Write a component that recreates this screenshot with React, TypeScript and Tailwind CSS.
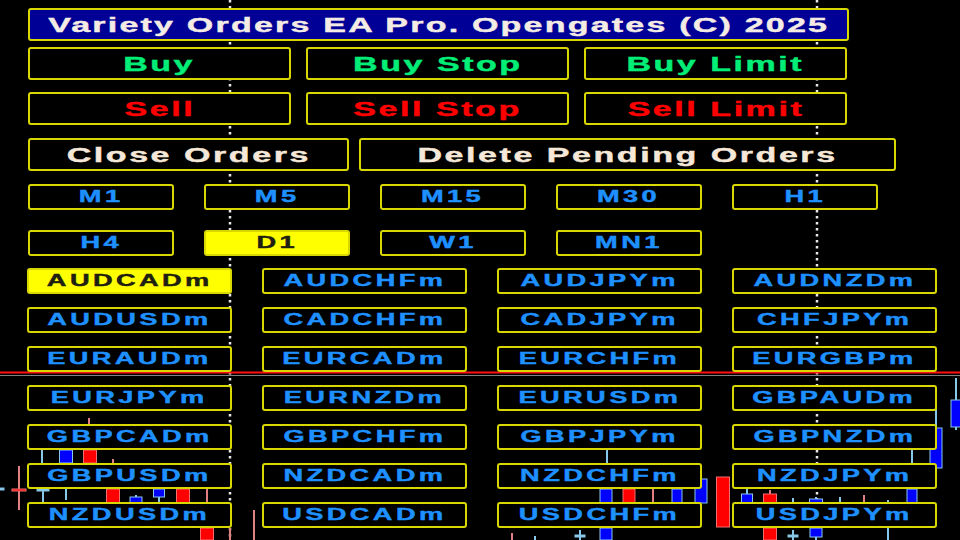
import React from "react";

const FONT = { fontFamily: '"Liberation Sans", Arial, sans-serif' };

type Candle = { x: number; w: number; bt: number; bb: number; wt: number; wb: number; c: "r" | "b" | "d" };

const candles: Candle[] = [
  { x: 89, w: 0, bt: 418, bb: 424, wt: 418, wb: 424, c: "r" },
  { x: 42, w: 0, bt: 450, bb: 463, wt: 450, wb: 463, c: "d" },
  { x: 66, w: 13, bt: 450, bb: 463, wt: 450, wb: 463, c: "b" },
  { x: 90, w: 13, bt: 450, bb: 463, wt: 448, wb: 463, c: "r" },
  { x: 113, w: 0, bt: 459, bb: 463, wt: 459, wb: 463, c: "r" },
  { x: 19, w: 14, bt: 489, bb: 491, wt: 466, wb: 510, c: "r" },
  { x: 2, w: 4, bt: 488, bb: 490, wt: 488, wb: 490, c: "d" },
  { x: 43, w: 12, bt: 489, bb: 491, wt: 489, wb: 503, c: "d" },
  { x: 66, w: 0, bt: 489, bb: 500, wt: 489, wb: 500, c: "d" },
  { x: 113, w: 13, bt: 489, bb: 503, wt: 489, wb: 503, c: "r" },
  { x: 136, w: 12, bt: 497, bb: 503, wt: 495, wb: 503, c: "b" },
  { x: 159, w: 11, bt: 489, bb: 497, wt: 489, wb: 503, c: "b" },
  { x: 183, w: 13, bt: 489, bb: 503, wt: 489, wb: 503, c: "r" },
  { x: 207, w: 0, bt: 489, bb: 503, wt: 489, wb: 503, c: "r" },
  { x: 207, w: 13, bt: 528, bb: 540, wt: 528, wb: 540, c: "r" },
  { x: 230, w: 0, bt: 528, bb: 540, wt: 528, wb: 540, c: "r" },
  { x: 254, w: 0, bt: 510, bb: 540, wt: 510, wb: 540, c: "r" },
  { x: 607, w: 0, bt: 450, bb: 463, wt: 450, wb: 463, c: "d" },
  { x: 606, w: 12, bt: 489, bb: 503, wt: 489, wb: 503, c: "b" },
  { x: 629, w: 12, bt: 489, bb: 503, wt: 489, wb: 503, c: "r" },
  { x: 653, w: 0, bt: 489, bb: 503, wt: 489, wb: 503, c: "r" },
  { x: 677, w: 10, bt: 489, bb: 503, wt: 489, wb: 503, c: "b" },
  { x: 701, w: 12, bt: 479, bb: 503, wt: 479, wb: 503, c: "b" },
  { x: 723, w: 13, bt: 477, bb: 527, wt: 477, wb: 527, c: "r" },
  { x: 747, w: 11, bt: 494, bb: 503, wt: 489, wb: 503, c: "b" },
  { x: 770, w: 13, bt: 494, bb: 503, wt: 490, wb: 503, c: "r" },
  { x: 793, w: 0, bt: 498, bb: 503, wt: 498, wb: 503, c: "d" },
  { x: 816, w: 13, bt: 499, bb: 503, wt: 497, wb: 503, c: "b" },
  { x: 840, w: 0, bt: 497, bb: 503, wt: 497, wb: 503, c: "d" },
  { x: 864, w: 0, bt: 495, bb: 503, wt: 495, wb: 503, c: "r" },
  { x: 888, w: 0, bt: 500, bb: 503, wt: 500, wb: 503, c: "d" },
  { x: 912, w: 10, bt: 489, bb: 503, wt: 450, wb: 503, c: "b" },
  { x: 936, w: 12, bt: 428, bb: 468, wt: 400, wb: 468, c: "b" },
  { x: 956, w: 10, bt: 400, bb: 427, wt: 378, wb: 430, c: "b" },
  { x: 512, w: 0, bt: 533, bb: 540, wt: 533, wb: 540, c: "r" },
  { x: 535, w: 0, bt: 536, bb: 540, wt: 536, wb: 540, c: "d" },
  { x: 580, w: 10, bt: 535, bb: 537, wt: 530, wb: 540, c: "d" },
  { x: 606, w: 12, bt: 528, bb: 540, wt: 528, wb: 540, c: "b" },
  { x: 770, w: 13, bt: 528, bb: 540, wt: 528, wb: 540, c: "r" },
  { x: 793, w: 10, bt: 535, bb: 537, wt: 530, wb: 540, c: "d" },
  { x: 816, w: 12, bt: 528, bb: 537, wt: 528, wb: 540, c: "b" },
  { x: 888, w: 0, bt: 528, bb: 540, wt: 528, wb: 540, c: "d" },
];

function Chart() {
  const dots = (x: number) => (
    <line x1={x} y1={0} x2={x} y2={540} stroke="#e8e8e8" strokeWidth={2.5} strokeDasharray="2.5 3.5" />
  );
  return (
    <svg className="absolute inset-0" width={960} height={540} viewBox="0 0 960 540">
      {dots(230)}
      {dots(817)}
      <line x1={0} y1={372.5} x2={960} y2={372.5} stroke="#ff1010" strokeWidth={2} />
      <line x1={0} y1={375.5} x2={960} y2={375.5} stroke="#808080" strokeWidth={1} />
      {candles.map((k, i) => {
        const wick = k.c === "r" ? "#e08080" : "#87c8ea";
        const fill = k.c === "r" ? "#ff0000" : k.c === "b" ? "#0000ff" : "#87c8ea";
        const stroke = k.c === "r" ? "#f07070" : "#87c8ea";
        return (
          <g key={i}>
            <line x1={k.x} y1={k.wt} x2={k.x} y2={k.wb} stroke={wick} strokeWidth={2} />
            {k.w > 0 && (
              <rect
                x={k.x - k.w / 2}
                y={k.bt}
                width={k.w}
                height={Math.max(2, k.bb - k.bt)}
                fill={fill}
                stroke={stroke}
                strokeWidth={1}
              />
            )}
          </g>
        );
      })}
    </svg>
  );
}

function Btn({
  label,
  w,
  h,
  text,
  size,
  track,
  active,
}: {
  label: string;
  w: string;
  h: string;
  text: string;
  size: string;
  track: string;
  active?: boolean;
}) {
  return (
    <div
      className={`${w} ${h} flex items-center justify-center rounded-[3px] border-2 border-[#d8d800] ${
        active ? "bg-[#ffff00]" : "bg-black"
      }`}
    >
      <span
        className={`inline-block [transform:scaleX(1.7)] [-webkit-text-stroke:0.4px_currentColor] font-bold leading-none ${size} ${track} ${text}`}
      >
        {label}
      </span>
    </div>
  );
}

const symbols = [
  "AUDCADm", "AUDCHFm", "AUDJPYm", "AUDNZDm",
  "AUDUSDm", "CADCHFm", "CADJPYm", "CHFJPYm",
  "EURAUDm", "EURCADm", "EURCHFm", "EURGBPm",
  "EURJPYm", "EURNZDm", "EURUSDm", "GBPAUDm",
  "GBPCADm", "GBPCHFm", "GBPJPYm", "GBPNZDm",
  "GBPUSDm", "NZDCADm", "NZDCHFm", "NZDJPYm",
  "NZDUSDm", "USDCADm", "USDCHFm", "USDJPYm",
];

export default function App() {
  return (
    <div className="relative w-[960px] h-[540px] overflow-hidden bg-black" style={FONT}>
      <Chart />
      <div className="relative flex flex-col pl-[28px] pt-[8px]">
        <div className="w-[821px] h-[33px] flex items-center justify-center rounded-[3px] border-2 border-[#d8d800] bg-[#000096]">
          <span className="inline-block [transform:scaleX(1.7)] [-webkit-text-stroke:0.4px_currentColor] font-bold leading-none text-[20px] tracking-[1.3px] text-[#f4ece4]">
            Variety Orders EA Pro. Opengates (C) 2025
          </span>
        </div>

        <div className="mt-[6px] flex gap-[15px]">
          <Btn label="Buy" w="w-[263px]" h="h-[33px]" text="text-[#00ee77]" size="text-[20px]" track="tracking-[1.5px]" />
          <Btn label="Buy Stop" w="w-[263px]" h="h-[33px]" text="text-[#00ee77]" size="text-[20px]" track="tracking-[1.5px]" />
          <Btn label="Buy Limit" w="w-[263px]" h="h-[33px]" text="text-[#00ee77]" size="text-[20px]" track="tracking-[1.5px]" />
        </div>

        <div className="mt-[12px] flex gap-[15px]">
          <Btn label="Sell" w="w-[263px]" h="h-[33px]" text="text-[#ff0000]" size="text-[20px]" track="tracking-[1.5px]" />
          <Btn label="Sell Stop" w="w-[263px]" h="h-[33px]" text="text-[#ff0000]" size="text-[20px]" track="tracking-[1.5px]" />
          <Btn label="Sell Limit" w="w-[263px]" h="h-[33px]" text="text-[#ff0000]" size="text-[20px]" track="tracking-[1.5px]" />
        </div>

        <div className="mt-[13px] flex gap-[10px]">
          <Btn label="Close Orders" w="w-[321px]" h="h-[33px]" text="text-[#f6e8d8]" size="text-[20px]" track="tracking-[1.5px]" />
          <Btn label="Delete Pending Orders" w="w-[537px]" h="h-[33px]" text="text-[#f6e8d8]" size="text-[20px]" track="tracking-[1.5px]" />
        </div>

        <div className="mt-[13px] flex gap-[30px]">
          {["M1", "M5", "M15", "M30", "H1"].map((t) => (
            <Btn key={t} label={t} w="w-[146px]" h="h-[26px]" text="text-[#1e90ff]" size="text-[16px]" track="tracking-[2px]" />
          ))}
        </div>

        <div className="mt-[20px] flex gap-[30px]">
          {["H4", "D1", "W1", "MN1"].map((t) => (
            <Btn
              key={t}
              label={t}
              w="w-[146px]"
              h="h-[26px]"
              text={t === "D1" ? "text-[#202010]" : "text-[#1e90ff]"}
              size="text-[16px]"
              track="tracking-[2px]"
              active={t === "D1"}
            />
          ))}
        </div>

        <div className="mt-[12px] ml-[-1px] grid grid-cols-[repeat(4,205px)] gap-x-[30px] gap-y-[13px]">
          {symbols.map((s) => (
            <Btn
              key={s}
              label={s}
              w="w-[205px]"
              h="h-[26px]"
              text={s === "AUDCADm" ? "text-[#202010]" : "text-[#1e90ff]"}
              size="text-[16px]"
              track="tracking-[2px]"
              active={s === "AUDCADm"}
            />
          ))}
        </div>
      </div>
    </div>
  );
}
